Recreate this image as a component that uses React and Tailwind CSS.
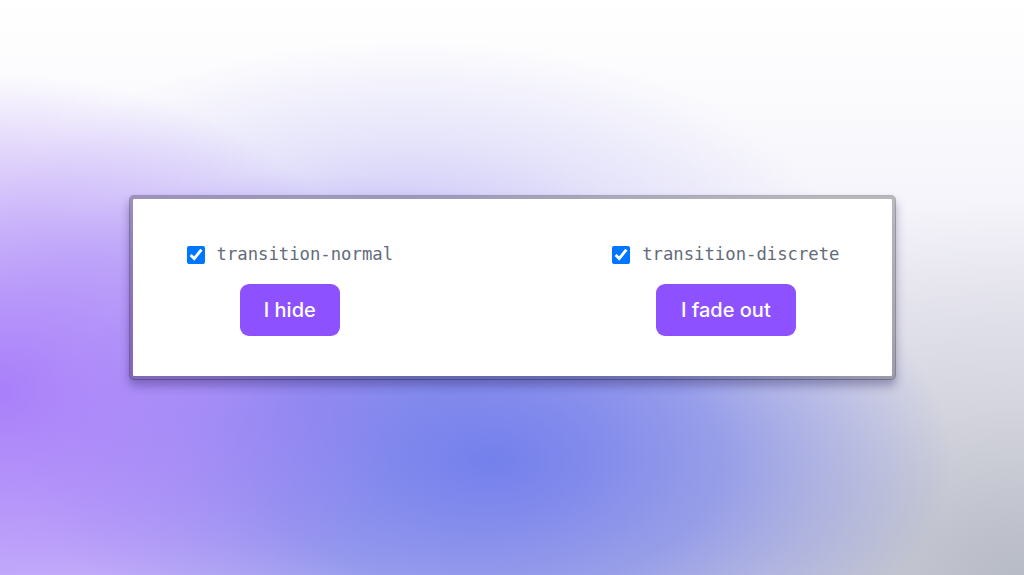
export default function App() {
  return (
    <div className="w-[1024px] h-[575px] flex items-center justify-center bg-[radial-gradient(ellipse_40%_55%_at_0%_68%,#a97ffa_0%,#ab84fa99_50%,transparent_100%),radial-gradient(ellipse_45%_45%_at_48%_80%,#7480ec_0%,#7a84eab0_50%,transparent_100%),radial-gradient(ellipse_40%_40%_at_30%_70%,#9b86f6cc_0%,transparent_100%),radial-gradient(ellipse_42%_38%_at_40%_45%,#c4bef9_0%,#cbc7f866_55%,transparent_100%),radial-gradient(ellipse_60%_65%_at_100%_100%,#b7bbc5_0%,#c4c7ce99_45%,transparent_100%),radial-gradient(ellipse_40%_40%_at_0%_100%,#d8ccfb_0%,transparent_100%),linear-gradient(180deg,#ffffff_0%,#fafafd_20%,#efedf8_55%,#e2dff2_100%)]">
      <div className="w-[767px] border-[4.5px] border-black/25 rounded-[5px] bg-white bg-clip-padding shadow-[0_6px_10px_rgba(40,30,90,0.35)]">
        <div className="flex justify-between pl-[54px] pr-[52px] pt-[44px] pb-[40px]">
          <div className="flex flex-col items-center gap-[17px]">
            <label className="h-[24px] flex items-center gap-[12px]">
              <input type="checkbox" defaultChecked className="w-[18px] h-[18px] m-0 accent-[#0075ff]" />
              <span className="font-['DejaVu_Sans_Mono',monospace] text-[17.25px] text-[#636b7a]">transition-normal</span>
            </label>
            <button className="w-[100px] h-[52px] rounded-[9px] bg-[#8e51ff] text-white font-['Inter',sans-serif] font-medium text-[20px]">I hide</button>
          </div>
          <div className="flex flex-col items-center gap-[17px]">
            <label className="h-[24px] flex items-center gap-[12px]">
              <input type="checkbox" defaultChecked className="w-[18px] h-[18px] m-0 accent-[#0075ff]" />
              <span className="font-['DejaVu_Sans_Mono',monospace] text-[17.25px] text-[#636b7a]">transition-discrete</span>
            </label>
            <button className="w-[140px] h-[52px] rounded-[9px] bg-[#8e51ff] text-white font-['Inter',sans-serif] font-medium text-[20px]">I fade out</button>
          </div>
        </div>
      </div>
    </div>
  );
}
